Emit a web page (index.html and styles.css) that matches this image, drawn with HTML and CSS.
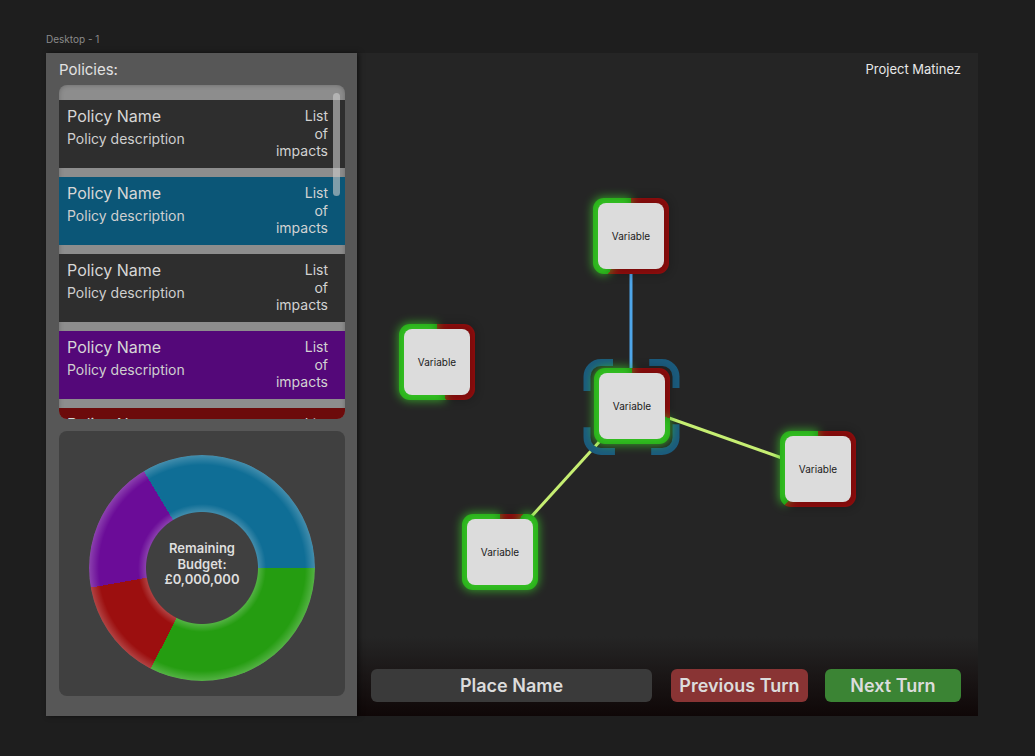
FILE: index.html
```html
<!DOCTYPE html>
<html lang="en">
<head>
<meta charset="utf-8">
<title>Desktop - 1</title>
<link rel="stylesheet" href="styles.css">
</head>
<body>
<div class="frame-label">Desktop - 1</div>
<div class="frame">
  <aside class="sidebar">
    <h2 class="sidebar-title">Policies:</h2>
    <div class="policy-list">
      <div class="policy policy-dark">
        <div class="policy-main"><div class="policy-name">Policy Name</div><div class="policy-desc">Policy description</div></div>
        <div class="policy-impacts">List<br>of<br>impacts</div>
      </div>
      <div class="policy policy-blue">
        <div class="policy-main"><div class="policy-name">Policy Name</div><div class="policy-desc">Policy description</div></div>
        <div class="policy-impacts">List<br>of<br>impacts</div>
      </div>
      <div class="policy policy-dark">
        <div class="policy-main"><div class="policy-name">Policy Name</div><div class="policy-desc">Policy description</div></div>
        <div class="policy-impacts">List<br>of<br>impacts</div>
      </div>
      <div class="policy policy-purple">
        <div class="policy-main"><div class="policy-name">Policy Name</div><div class="policy-desc">Policy description</div></div>
        <div class="policy-impacts">List<br>of<br>impacts</div>
      </div>
      <div class="policy policy-red">
        <div class="policy-main"><div class="policy-name">Policy Name</div><div class="policy-desc">Policy description</div></div>
        <div class="policy-impacts">List<br>of<br>impacts</div>
      </div>
      <div class="scrollbar"></div>
    </div>
    <div class="budget-card">
      <div class="donut">
        <div class="donut-ring"></div>
        <div class="donut-glow"></div>
        <div class="donut-label">Remaining<br>Budget:<br>£0,000,000</div>
      </div>
    </div>
  </aside>
  <main class="canvas">
    <div class="canvas-header">Project Matinez</div>
    <div class="graph">
      <svg class="edges" width="621" height="560" viewBox="0 0 621 560">
        <line x1="274" y1="221" x2="274" y2="315" stroke="#4ea6ea" stroke-width="3"/>
        <line x1="312" y1="365" x2="425" y2="405" stroke="#c6ee72" stroke-width="3"/>
        <line x1="243" y1="388" x2="174" y2="464" stroke="#c6ee72" stroke-width="3"/>
        <rect x="230" y="309.5" width="89" height="89" rx="14" fill="none" stroke="#1b5b7d" stroke-width="7" stroke-dasharray="46 36.25" stroke-dashoffset="34"/>
      </svg>
      <div class="node node-top"><div class="node-inner">Variable</div></div>
      <div class="node node-left"><div class="node-inner">Variable</div></div>
      <div class="node node-center"><div class="node-inner">Variable</div></div>
      <div class="node node-right"><div class="node-inner">Variable</div></div>
      <div class="node node-bottom"><div class="node-inner">Variable</div></div>
    </div>
    <div class="canvas-footer">
      <div class="place-name">Place Name</div>
      <button class="turn-btn prev">Previous Turn</button>
      <button class="turn-btn next">Next Turn</button>
    </div>
  </main>
</div>
</body>
</html>
```
FILE: styles.css
```css
* { box-sizing: border-box; }
html, body { margin: 0; padding: 0; }
body {
  background: #1e1e1e;
  font-family: Inter, "Noto Sans", sans-serif;
  width: 1035px;
  height: 756px;
  overflow: hidden;
}
.frame-label {
  padding: 33px 0 0 46px;
  font-size: 10px;
  line-height: 12px;
  color: #8a8a8a;
}
.frame {
  margin: 8px 0 0 46px;
  width: 932px;
  height: 663px;
  display: flex;
}
.sidebar {
  width: 311px;
  flex: none;
  background: #575757;
  padding: 8px 12px 20px 13px;
  display: flex;
  flex-direction: column;
  position: relative;
  z-index: 2;
  box-shadow: 2px 0 5px rgba(0,0,0,0.55);
}
.sidebar-title {
  margin: 0 0 6px 0;
  font-size: 15px;
  line-height: 18px;
  font-weight: 400;
  color: #e2e2e2;
}
.policy-list {
  position: relative;
  height: 334px;
  flex: none;
  background: #8d8d8d;
  border-radius: 8px;
  overflow: hidden;
  padding-top: 15px;
  display: flex;
  flex-direction: column;
  gap: 9px;
  box-shadow: inset 0 0 5px rgba(0,0,0,0.25);
}
.policy {
  height: 68px;
  flex: none;
  display: flex;
  justify-content: space-between;
  padding: 5px 17px 0 8px;
  color: #d6d6d6;
}
.policy-dark { background: #2e2e2e; }
.policy-blue { background: #0b5677; }
.policy-purple { background: #540879; }
.policy-red { background: #6c0b0b; }
.policy-name { font-size: 16px; line-height: 22px; }
.policy-desc { font-size: 14px; line-height: 22px; margin-top: 1px; color: #cfcfcf; }
.policy-impacts {
  font-size: 14px;
  line-height: 17.5px;
  padding-top: 2px;
  text-align: right;
  color: #d2d2d2;
}
.scrollbar {
  position: absolute;
  left: 274px;
  top: 8px;
  width: 7px;
  height: 103px;
  border-radius: 4px;
  background: rgba(205,205,205,0.6);
}
.budget-card {
  margin-top: 12px;
  flex: 1;
  background: #404040;
  border-radius: 8px;
  display: flex;
  align-items: center;
  justify-content: center;
  padding-top: 8px;
}
.donut {
  position: relative;
  width: 226px;
  height: 226px;
  display: flex;
  align-items: center;
  justify-content: center;
}
.donut-ring, .donut-glow {
  position: absolute;
  inset: 0;
  border-radius: 50%;
}
.donut-ring {
  background: conic-gradient(from -31deg, #0f6e96 0deg 121deg, #259d11 121deg 238deg, #9c0f0f 238deg 291deg, #6b0c98 291deg 360deg);
  -webkit-mask: radial-gradient(circle, transparent 55.5px, #000 56.5px);
  mask: radial-gradient(circle, transparent 55.5px, #000 56.5px);
}
.donut-glow {
  background: radial-gradient(circle, transparent 55.5px, rgba(255,255,255,0.2) 56.5px, rgba(255,255,255,0) 64px, rgba(255,255,255,0) 103px, rgba(255,255,255,0.22) 113px, transparent 113.5px);
}
.donut-label {
  position: relative;
  text-align: center;
  font-size: 13px;
  line-height: 15.5px;
  font-weight: 600;
  color: #dedede;
  padding-bottom: 6px;
}
.canvas {
  flex: 1;
  position: relative;
  display: flex;
  flex-direction: column;
  background: linear-gradient(to bottom, #252525 0%, #252525 88%, #0f0707 100%);
}
.canvas-header {
  padding: 8px 17px 0 0;
  text-align: right;
  font-size: 13px;
  line-height: 16px;
  color: #e8e8e8;
}
.graph {
  flex: 1;
}
.edges {
  position: absolute;
  left: 0;
  top: 0;
}
.node {
  --split: 180deg;
  position: absolute;
  z-index: 1;
  width: 76px;
  height: 76px;
  padding: 5px;
  border-radius: 11px;
  background: conic-gradient(#9c0e0e 0deg var(--split), #20a012 var(--split) 360deg);
}
.node::before {
  content: "";
  position: absolute;
  inset: -1px;
  border-radius: 12px;
  background: conic-gradient(rgba(0,0,0,0.3) 0deg var(--split), #3ccc2a var(--split) 360deg);
  filter: blur(5px);
  opacity: 0.7;
  z-index: -1;
}
.node-inner {
  width: 100%;
  height: 100%;
  background: #dcdcdc;
  border-radius: 8px;
  display: flex;
  align-items: center;
  justify-content: center;
  font-size: 10px;
  color: #1a1a1a;
}
.node-top { left: 236px; top: 145px; --split: 211deg; }
.node-left { left: 42px; top: 271px; --split: 167deg; }
.node-center { left: 237px; top: 315px; --split: 108deg; }
.node-right { left: 423px; top: 378px; --split: 223deg; }
.node-bottom { left: 105px; top: 461px; --split: 31deg; }
.canvas-footer {
  display: flex;
  padding: 0 17px 14px 14px;
  position: relative;
}
.place-name, .turn-btn {
  height: 33px;
  border-radius: 6px;
  border: none;
  font-family: Inter, "Noto Sans", sans-serif;
  font-size: 18px;
  font-weight: 600;
  color: #dcdcdc;
  display: flex;
  align-items: center;
  justify-content: center;
  padding: 0;
}
.place-name {
  flex: 1;
  background: #3a3a3a;
  margin-right: 19px;
}
.turn-btn.prev {
  width: 137px;
  background: #893434;
  margin-right: 17px;
}
.turn-btn.next {
  width: 136px;
  background: #3b8434;
}
```
